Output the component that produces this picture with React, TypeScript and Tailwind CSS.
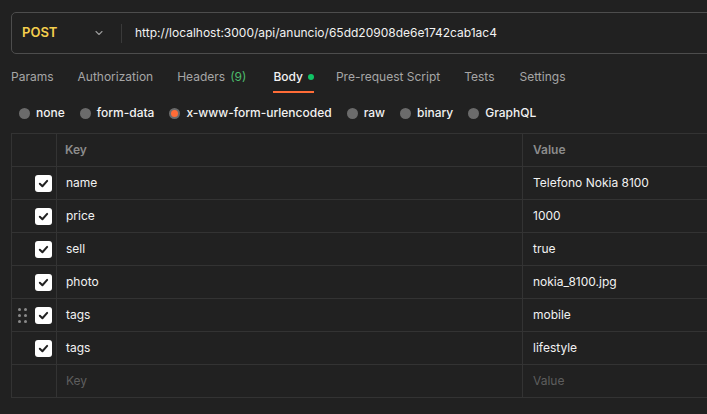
import React from "react";

type Row = { key: string; value: string; handle?: boolean };

const TABS = [
  { label: "Params", gap: "mr-[24px]" },
  { label: "Authorization", gap: "mr-[24px]" },
  { label: "Headers", count: "(9)", gap: "mr-[27px]" },
  { label: "Body", active: true, gap: "mr-[22px]" },
  { label: "Pre-request Script", gap: "mr-[24px]" },
  { label: "Tests", gap: "mr-[25px]" },
  { label: "Settings", gap: "mr-[24px]" },
];

const BODY_TYPES = ["none", "form-data", "x-www-form-urlencoded", "raw", "binary", "GraphQL"];

const ROWS: Row[] = [
  { key: "name", value: "Telefono Nokia 8100" },
  { key: "price", value: "1000" },
  { key: "sell", value: "true" },
  { key: "photo", value: "nokia_8100.jpg" },
  { key: "tags", value: "mobile", handle: true },
  { key: "tags", value: "lifestyle" },
];

function Checkbox() {
  return (
    <div className="w-[17px] h-[17px] rounded-[3px] bg-white flex items-center justify-center">
      <svg width="11" height="11" viewBox="0 0 12 12" fill="none">
        <path d="M2 6.3 L4.8 9 L10 3.2" stroke="#212121" strokeWidth="2.2" strokeLinecap="round" strokeLinejoin="round" />
      </svg>
    </div>
  );
}

function DragHandle() {
  return (
    <div className="grid grid-cols-2 gap-x-[3px] gap-y-[3px] mr-[8px]">
      {[0, 1, 2, 3, 4, 5].map(i => (
        <span key={i} className="w-[3px] h-[3px] rounded-full bg-[#8a8a8a]" />
      ))}
    </div>
  );
}

export default function App() {
  return (
    <div className="w-[707px] h-[414px] overflow-hidden bg-[#212121] text-[12px] text-[#e6e6e6] font-['Inter','Noto_Sans',sans-serif]">
      {/* URL bar */}
      <div className="pt-[12px] pl-[11px]">
        <div className="w-[740px] h-[42px] flex items-center border border-[#4d4d4d] rounded-[5px]">
          <div className="w-[109px] h-full flex items-center justify-between pl-[10px] pr-[17px]">
            <span className="font-semibold text-[13px] text-[#f5cf4d]">POST</span>
            <svg width="10" height="10" viewBox="0 0 10 10" fill="none">
              <path d="M2 3.5 L5 6.5 L8 3.5" stroke="#9a9a9a" strokeWidth="1.1" strokeLinecap="round" strokeLinejoin="round" />
            </svg>
          </div>
          <div className="w-px h-[19px] bg-[#3a3a3a]" />
          <span className="pl-[13px] text-[#f2f2f2]">http://localhost:3000/api/anuncio/65dd20908de6e1742cab1ac4</span>
        </div>
      </div>

      {/* Tabs */}
      <div className="flex items-stretch pl-[11px] h-[39px] pt-[7px]">
        {TABS.map(tab => (
          <div key={tab.label} className={`relative flex items-center ${tab.gap}`}>
            <span className={tab.active ? "text-[#f2f2f2] font-medium" : "text-[#a6a6a6]"}>{tab.label}</span>
            {tab.count && <span className="ml-[5px] text-[#4cbb6c]">{tab.count}</span>}
            {tab.active && <span className="ml-[5px] w-[6px] h-[6px] rounded-full bg-[#10c466]" />}
            {tab.active && <span className="absolute left-0 right-0 bottom-[0px] h-[2px] bg-[#ff6c37]" />}
          </div>
        ))}
      </div>

      {/* Body type radios */}
      <div className="flex items-center pl-[19px] h-[40px]">
        {BODY_TYPES.map(t => (
          <div key={t} className="flex items-center mr-[15px]">
            <span className="w-[11px] h-[11px] rounded-full bg-[#6b6b6b] flex items-center justify-center mr-[6px]">
              {t === "x-www-form-urlencoded" && <span className="w-[7px] h-[7px] rounded-full bg-[#ff6c37]" />}
            </span>
            <span className="text-[#f2f2f2] font-medium">{t}</span>
          </div>
        ))}
      </div>

      {/* Table */}
      <div className="pl-[11px]">
        <div className="w-[760px] border-t border-l border-[#333333]">
          <div className="flex h-[33px] border-b border-[#333333]">
            <div className="w-[45px] border-r border-[#333333]" />
            <div className="w-[466px] flex items-center pl-[8px] border-r border-[#333333] font-semibold text-[#8c8c8c]">Key</div>
            <div className="flex-1 flex items-center pl-[10px] font-semibold text-[#8c8c8c]">Value</div>
          </div>
          {ROWS.map((row, i) => (
            <div key={i} className="flex h-[33px] border-b border-[#333333]">
              <div className="w-[45px] border-r border-[#333333] flex items-center justify-end pr-[4px]">
                {row.handle && <DragHandle />}
                <Checkbox />
              </div>
              <div className="w-[466px] flex items-center pl-[9px] border-r border-[#333333] text-[#f2f2f2]">{row.key}</div>
              <div className="flex-1 flex items-center pl-[10px] text-[#f2f2f2]">{row.value}</div>
            </div>
          ))}
          <div className="flex h-[33px] border-b border-[#333333]">
            <div className="w-[45px] border-r border-[#333333]" />
            <div className="w-[466px] flex items-center pl-[9px] border-r border-[#333333] text-[#5e5e5e]">Key</div>
            <div className="flex-1 flex items-center pl-[10px] text-[#5e5e5e]">Value</div>
          </div>
        </div>
      </div>
    </div>
  );
}
